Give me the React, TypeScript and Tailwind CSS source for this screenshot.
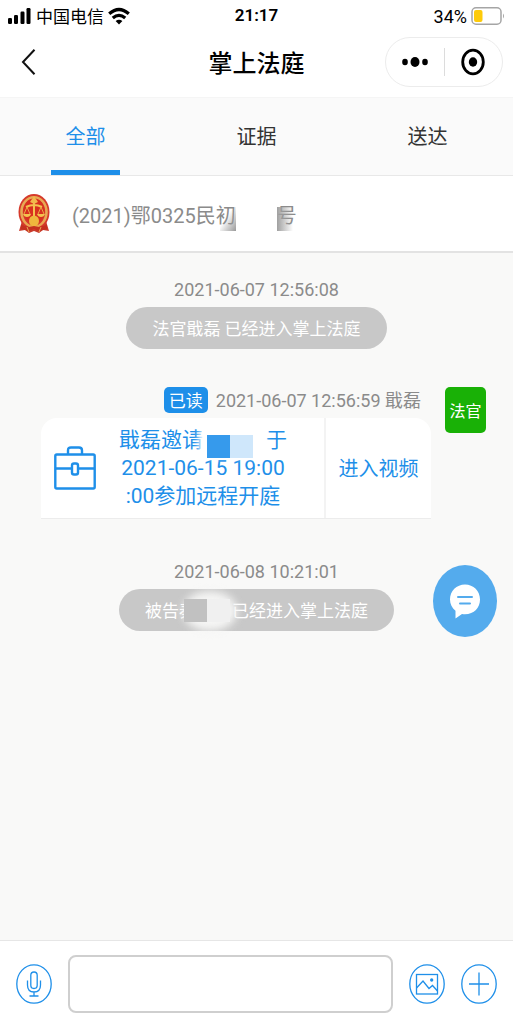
import { useState } from "react";

const TABS = ["全部", "证据", "送达"];

function SignalIcon() {
  return (
    <svg width="24" height="18" viewBox="0 0 24 18" aria-hidden="true">
      <rect x="0" y="11" width="4" height="6" rx="1.2" />
      <rect x="6" y="8" width="4" height="9" rx="1.2" />
      <rect x="12.500" y="4.500" width="4" height="12.500" rx="1.2" />
      <rect x="18.500" y="1" width="4" height="16" rx="1.2" />
    </svg>
  );
}

function WifiIcon() {
  return (
    <svg width="22" height="18" viewBox="0 0 22 18" fill="none" stroke="#000" strokeWidth="3.2" aria-hidden="true">
      <path d="M1.200 6.800Q11 -1.800 20.800 6.800" />
      <path d="M4.800 11Q11 5.600 17.200 11" />
      <path d="M11 17.500L7.600 14Q11 11.400 14.400 14Z" fill="#000" stroke="none" />
    </svg>
  );
}

function BatteryIcon() {
  return (
    <svg width="34" height="20" viewBox="0 0 34 20" fill="none" aria-hidden="true">
      <rect x="1" y="1.800" width="29" height="16.400" rx="4" stroke="#a5a5a5" strokeWidth="1.500" />
      <rect x="3" y="4" width="8.500" height="12" rx="2" fill="#fecb0a" />
      <path d="M32 7.500Q34 10 32 12.500Z" fill="#a5a5a5" />
    </svg>
  );
}

function CourtEmblem() {
  return (
    <svg width="34" height="42" viewBox="0 0 34 42" fill="none" aria-hidden="true">
      <path d="M5 28L2 38L8 37L12 40L17 38L22 40L26 37L32 38L29 28Z" fill="#c93a2c" />
      <ellipse cx="17" cy="19" rx="15.500" ry="18" fill="#d63a2b" />
      <ellipse cx="17" cy="19" rx="12.500" ry="14.800" stroke="#e8a953" strokeWidth="2.600" />
      <ellipse cx="17" cy="18" rx="10.500" ry="12.500" fill="#d8301f" />
      <path d="M17 8V29M9 14Q17 10 25 14" stroke="#f4c24f" strokeWidth="2" />
      <path d="M17 3L19 6L21 9L17 11L13 9L15 6Z" fill="#f1b94c" />
      <path d="M10 14L7 21M10 14L13 21M24 14L21 21M24 14L27 21" stroke="#eaa944" />
      <path d="M6 21H14Q13 24 10 24Q7 24 6 21ZM20 21H28Q27 24 24 24Q21 24 20 21Z" fill="#f4c24f" />
      <ellipse cx="17" cy="28" rx="5" ry="5.500" fill="#efb63d" />
      <path d="M4 32L12 34L17 33L22 34L30 32L30 36L22 38L17 36L12 38L4 36Z" fill="#c5301f" />
      <path d="M10 34L12 39M24 34L22 39" stroke="#e8a953" />
    </svg>
  );
}

function BriefcaseIcon() {
  return (
    <svg width="42" height="44" viewBox="0 0 42 44" fill="none" stroke="#1e8fe9" strokeWidth="2.400" aria-hidden="true">
      <rect x="1.300" y="8.500" width="39.400" height="34" rx="1.500" />
      <path d="M14 8.500V4.500Q14 1.500 17 1.500H25Q28 1.500 28 4.500V8.500M1 22.500H18M24 22.500H41" />
      <rect x="18" y="17.500" width="6" height="11" rx="2" />
    </svg>
  );
}

function Notice({ time, children }: { time: string; children: React.ReactNode }) {
  return (
    <div className="flex flex-col items-center gap-1">
      <time className="text-[18px] leading-[26px] text-[#8b8b8b]">{time}</time>
      <p className="flex h-[42px] items-center rounded-full bg-[#c8c8c8] px-[26px] pt-1 text-[17px] text-white">
        {children}
      </p>
    </div>
  );
}

export default function App() {
  const [active, setActive] = useState("全部");
  const [message, setMessage] = useState("");

  return (
    <div className="flex min-h-screen flex-col bg-white font-['Roboto','Noto_Sans_CJK_SC',sans-serif] text-black">
      {/* Status bar */}
      <div className="grid h-8 grid-cols-[1fr_auto_1fr] items-center px-2">
        <div className="flex items-center gap-1">
          <SignalIcon />
          <span className="pt-1 text-[17px]">中国电信</span>
          <WifiIcon />
        </div>
        <span className="text-[17px] font-semibold">21:17</span>
        <div className="flex items-center justify-end gap-1">
          <span className="text-[18px]">34%</span>
          <BatteryIcon />
        </div>
      </div>

      {/* Navigation */}
      <header className="grid h-[66px] grid-cols-[1fr_auto_1fr] items-center border-b border-[#f5f5f5] px-[10px] pb-[6px]">
        <button type="button" aria-label="返回" className="ml-[10px] w-5">
          <svg width="18" height="28" viewBox="0 0 18 28" fill="none" stroke="#111" strokeWidth="2" aria-hidden="true">
            <path d="M14.500 1.800L3 14L14.500 26.200" />
          </svg>
        </button>
        <h1 className="pt-1 text-[24px] font-medium">掌上法庭</h1>
        <div className="flex h-[50px] w-[118px] items-center justify-self-end rounded-full border border-[#ececec]">
          <button type="button" aria-label="更多" className="flex flex-1 justify-center">
            <svg width="28" height="12" viewBox="0 0 28 12" aria-hidden="true">
              <ellipse cx="4" cy="6" rx="2.800" ry="3.200" />
              <ellipse cx="14" cy="6" rx="4.500" ry="5" />
              <ellipse cx="24" cy="6" rx="2.800" ry="3.200" />
            </svg>
          </button>
          <span className="h-7 w-px bg-[#dcdcdc]" />
          <button type="button" aria-label="关闭" className="flex flex-1 justify-center">
            <svg width="26" height="28" viewBox="0 0 26 28" aria-hidden="true">
              <ellipse cx="13" cy="14" rx="10.300" ry="11.800" fill="none" stroke="#000" strokeWidth="2.800" />
              <ellipse cx="13" cy="14" rx="4.200" ry="4.700" />
            </svg>
          </button>
        </div>
      </header>

      <nav className="flex h-[78px] border-b border-[#e8e8e8] bg-[#fafafa]">
        {TABS.map((tab) => (
          <button
            key={tab}
            type="button"
            onClick={() => setActive(tab)}
            className={`flex flex-1 flex-col items-center text-[20px] ${
              active === tab ? "text-[#1e8fe9]" : "text-[#333]"
            }`}
          >
            <span className="flex h-[72px] items-center pt-[6px]">{tab}</span>
            <span className={`h-[5px] w-2/5 ${active === tab ? "bg-[#1e8fe9]" : "bg-transparent"}`} />
          </button>
        ))}
      </nav>

      {/* Case number */}
      <section className="flex h-[77px] items-center border-b-2 border-[#e3e3e3] pl-[17px] text-[20px] text-[#8b8b8b]">
        <CourtEmblem />
        <div className="ml-[21px] flex items-center pt-1">
          <span className="relative whitespace-nowrap">
            (2021)鄂0325民初
            <span className="absolute right-0 bottom-0 h-6 w-4 bg-linear-to-br from-transparent from-40% to-[#999]" />
            <span className="absolute -right-1 bottom-0 h-7 w-1 bg-white" />
          </span>
          <span className="relative ml-[41px]">
            号
            <span className="absolute bottom-0 left-0 h-6 w-4 bg-linear-to-r from-[#a0a0a0] to-transparent" />
          </span>
        </div>
      </section>

      {/* Messages */}
      <main className="relative flex-1 bg-[#f9f9f8] pt-6">
        <Notice time="2021-06-07 12:56:08">法官戢磊 已经进入掌上法庭</Notice>

        <div className="mt-[38px] flex gap-[14px] pr-[27px] pl-[41px]">
          <div className="flex-1">
            <div className="flex items-center justify-end gap-2 pr-[10px] text-[#8b8b8b]">
              <span className="flex h-[26px] w-[44px] items-center justify-center rounded-[5px] bg-[#1e8fe9] pt-1 text-[17px] text-white">
                已读
              </span>
              <span className="pt-[2px] text-[18px] leading-6">2021-06-07 12:56:59 戢磊</span>
            </div>
            <div className="mt-[5px] flex h-[101px] rounded-t-2xl border-b border-[#ececec] bg-white text-[#1e8fe9]">
              <div className="flex flex-1 items-center pl-[13px]">
                <BriefcaseIcon />
                <p className="flex-1 pr-[18px] pl-1 text-center text-[21px] leading-7">
                  戢磊邀请
                  <span className="relative inline-block h-5 w-[63px] align-middle">
                    <span className="absolute -top-1 -left-1 h-[30px] w-[66px] rounded-lg bg-white blur-[3px]" />
                    <span className="absolute top-1 left-1 flex">
                      <span className="size-[23px] bg-[#369aec]" />
                      <span className="size-[23px] bg-[#cfe7fb]" />
                    </span>
                  </span>
                  于
                  <br />
                  2021-06-15 19:00
                  <br />
                  :00参加远程开庭
                </p>
              </div>
              <button type="button" className="w-[107px] border-l-2 border-[#f3f3f3] pt-[2px] text-[20px]">
                进入视频
              </button>
            </div>
          </div>
          <span className="flex h-[46px] w-[41px] items-center justify-center rounded-[5px] bg-[#19b106] pt-1 text-[16px] text-white">
            法官
          </span>
        </div>

        <div className="mt-10">
          <Notice time="2021-06-08 10:21:01">
            被告
            <span className="relative w-[53px]">
              秦
              <span className="absolute -top-2 left-1 h-10 w-[54px] rounded-[50%] bg-[#f5f5f4] blur-[4px]" />
              <span className="absolute top-0 left-[5px] flex">
                <span className="size-[23px] bg-[#c1c1c1]" />
                <span className="size-[23px] bg-[#f0f0f0]" />
              </span>
            </span>
            已经进入掌上法庭
          </Notice>
        </div>

        <button
          type="button"
          aria-label="留言"
          className="absolute top-[312px] right-4 flex h-[72px] w-16 items-center justify-center rounded-[50%] bg-[#54abed]"
        >
          <svg width="32" height="36" viewBox="0 0 32 36" aria-hidden="true">
            <path
              d="M16 1.500C7.500 1.500 1 8 1 16.500C1 21 3 25 6.500 27.800V35.500L13 31C24 32.500 31 25.500 31 16.500C31 8 24.500 1.500 16 1.500Z"
              fill="#fff"
            />
            <path d="M9 14H23M11 20.500H21" stroke="#54abed" strokeWidth="2" strokeLinecap="round" />
          </svg>
        </button>
      </main>

      {/* Input bar */}
      <footer className="flex h-[87px] items-center gap-4 border-t border-[#e6e6e6] px-4">
        <button type="button" aria-label="语音">
          <svg width="36" height="40" viewBox="0 0 36 40" fill="none" stroke="#1e8fe9" strokeWidth="1.300" aria-hidden="true">
            <ellipse cx="18" cy="20" rx="17.200" ry="19.200" />
            <rect x="14.800" y="8" width="6.400" height="16.500" rx="3.200" />
            <path d="M11.500 16.500V21Q11.500 28 18 28Q24.500 28 24.500 21V16.500M18 28V32M13.500 32H22.500" />
          </svg>
        </button>
        <input
          type="text"
          aria-label="消息"
          value={message}
          onChange={(e) => setMessage(e.target.value)}
          className="h-[58px] min-w-0 flex-1 rounded-lg border-2 border-[#cfcfcf] bg-white px-3 text-[20px] outline-none"
        />
        <button type="button" aria-label="图片">
          <svg width="36" height="40" viewBox="0 0 36 40" fill="none" stroke="#1e8fe9" strokeWidth="1.300" aria-hidden="true">
            <ellipse cx="18" cy="20" rx="17.200" ry="19.200" />
            <rect x="7.500" y="10.500" width="21" height="19.500" />
            <path d="M7.500 24L14 17L20 24.500L23.500 21.500L28.500 27" />
            <circle cx="22.700" cy="16" r="1" fill="#1e8fe9" />
          </svg>
        </button>
        <button type="button" aria-label="更多功能">
          <svg width="36" height="40" viewBox="0 0 36 40" fill="none" stroke="#1e8fe9" strokeWidth="1.300" aria-hidden="true">
            <ellipse cx="18" cy="20" rx="17.200" ry="19.200" />
            <path d="M18 8.500V31.500M8 20H28" />
          </svg>
        </button>
      </footer>
    </div>
  );
}
